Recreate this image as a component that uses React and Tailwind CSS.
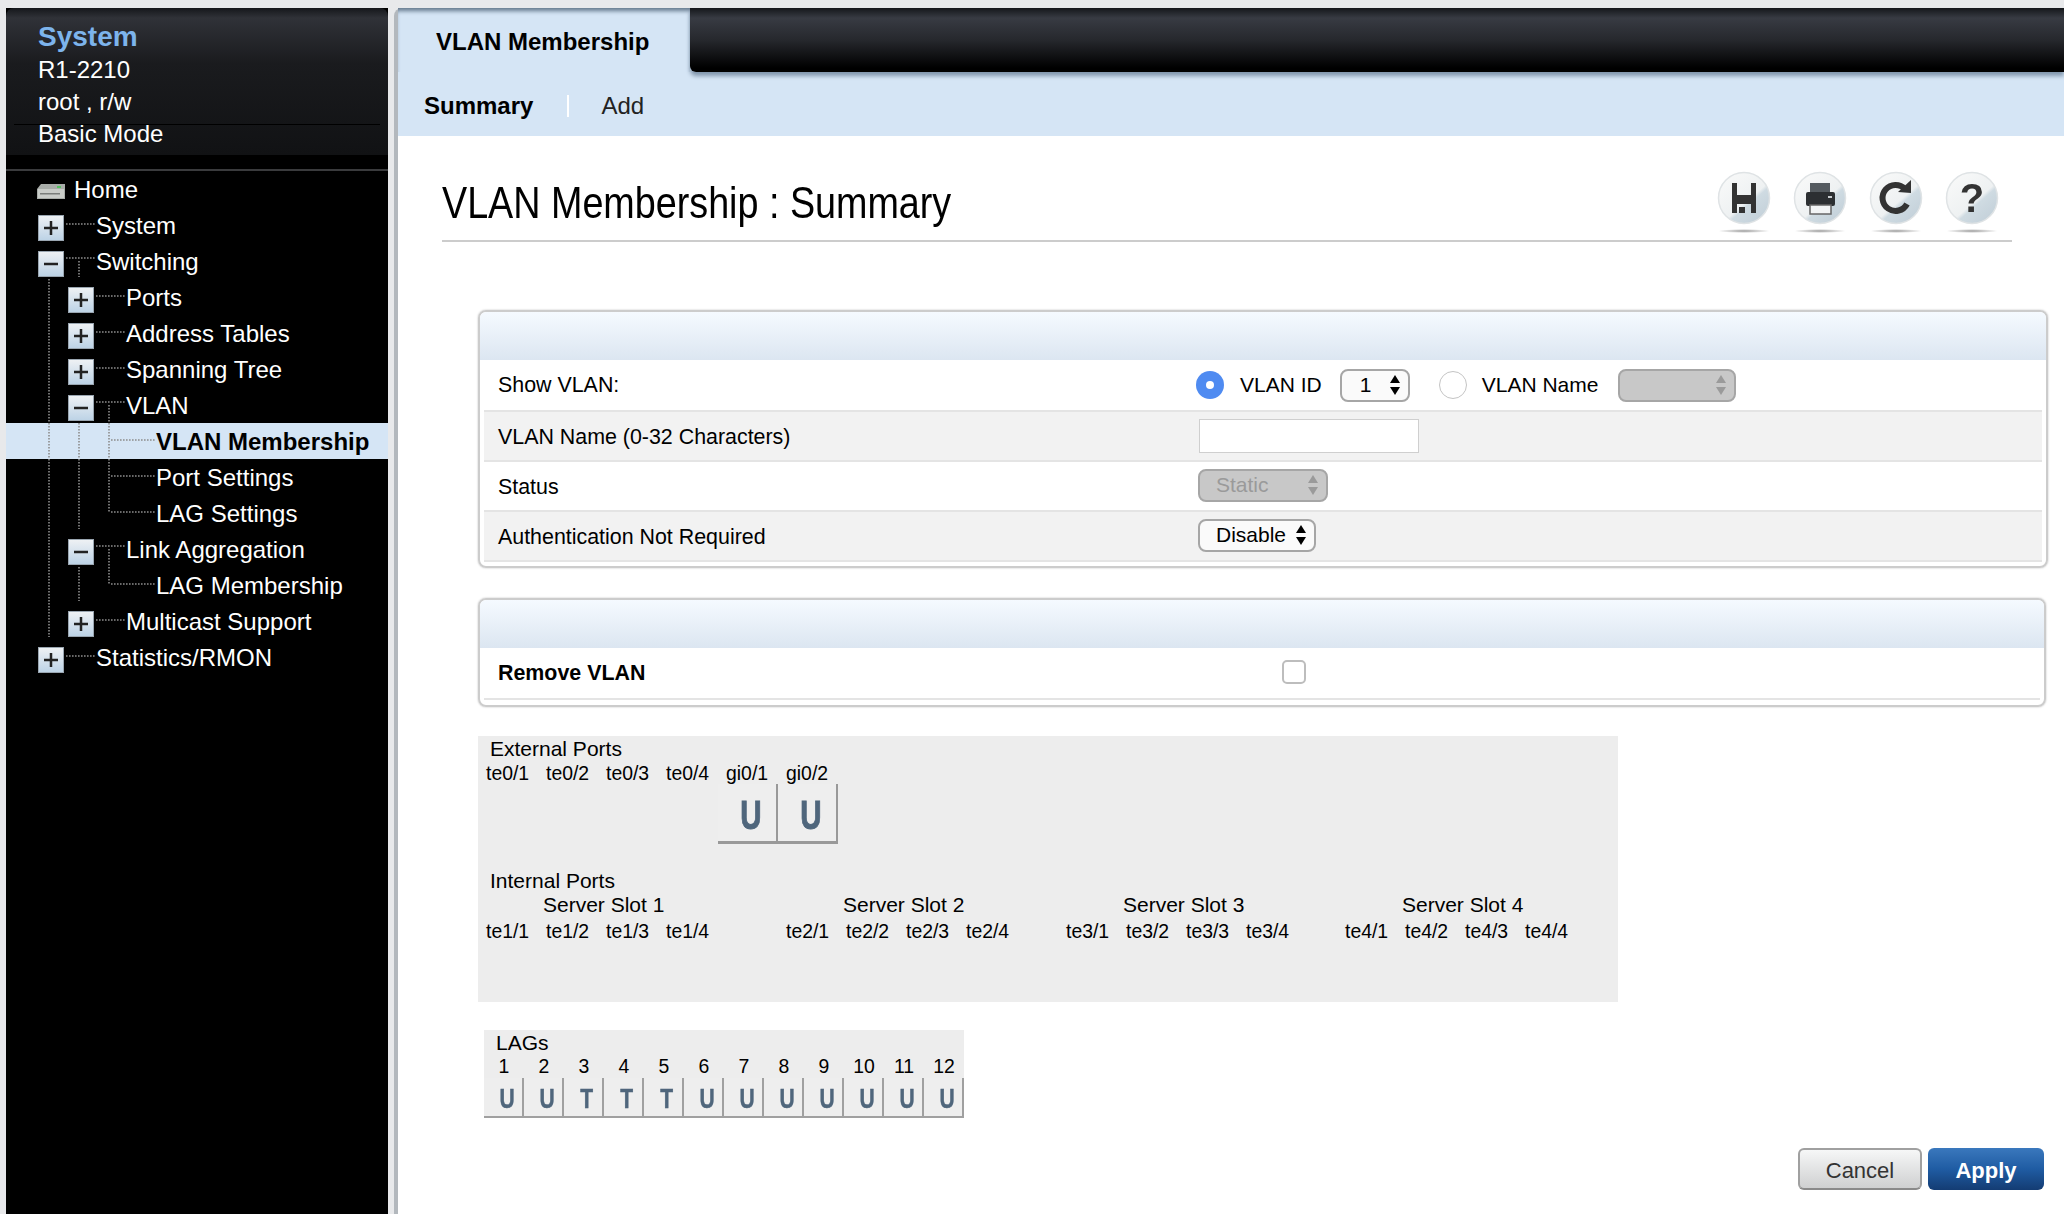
import React from "react";

const treeRows = [
  { label: "System", level: 0, box: "plus" },
  { label: "Switching", level: 0, box: "minus" },
  { label: "Ports", level: 1, box: "plus" },
  { label: "Address Tables", level: 1, box: "plus" },
  { label: "Spanning Tree", level: 1, box: "plus" },
  { label: "VLAN", level: 1, box: "minus" },
  { label: "VLAN Membership", level: 2, active: true },
  { label: "Port Settings", level: 2 },
  { label: "LAG Settings", level: 2 },
  { label: "Link Aggregation", level: 1, box: "minus" },
  { label: "LAG Membership", level: 2 },
  { label: "Multicast Support", level: 1, box: "plus" },
  { label: "Statistics/RMON", level: 0, box: "plus" },
];

const levelPad = { 0: "pl-[32px]", 1: "pl-[62px]", 2: "pl-[150px]" };
const levelGap = { 0: "ml-[32px]", 1: "ml-[32px]", 2: "ml-0" };

function TreeBox({ kind }) {
  return (
    <span className="mt-1.5 flex h-[26px] w-[26px] shrink-0 items-center justify-center border border-[#9aa6b1] bg-gradient-to-b from-[#eef1f4] to-[#bdd3e6]">
      <svg width="16" height="16" viewBox="0 0 16 16">
        <rect x="1" y="6.75" width="14" height="2.5" fill="#222" />
        {kind === "plus" && <rect x="6.75" y="1" width="2.5" height="14" fill="#222" />}
      </svg>
    </span>
  );
}

function TreeLines() {
  const lines = [
    [49, 280, 49, 638],
    [79, 262, 79, 278],
    [79, 424, 79, 530],
    [79, 568, 79, 602],
    [109, 406, 109, 513],
    [109, 550, 109, 585],
    [66, 225, 96, 225],
    [66, 259, 96, 259],
    [66, 657, 96, 657],
    [96, 297, 126, 297],
    [96, 333, 126, 333],
    [96, 369, 126, 369],
    [96, 403, 126, 403],
    [96, 547, 126, 547],
    [96, 621, 126, 621],
    [111, 441, 156, 441],
    [111, 477, 156, 477],
    [111, 513, 156, 513],
    [111, 585, 156, 585],
  ];
  return (
    <svg className="pointer-events-none absolute inset-0" width="382" height="520">
      <g transform="translate(-6,-172)" stroke="#8c8c8c" strokeWidth="1.6" strokeDasharray="1.6 1.4">
        {lines.map((l, i) => (
          <line key={i} x1={l[0]} y1={l[1]} x2={l[2]} y2={l[3]} />
        ))}
      </g>
    </svg>
  );
}

function Sidebar() {
  return (
    <aside className="flex w-[382px] shrink-0 flex-col bg-black text-white">
      <div className="relative h-[147px] rounded-t-lg bg-[linear-gradient(#15171b_0,#303238_10px,#1a1b1e_55px,#111214_147px)] pl-[32px] pt-[13px]">
        <div className="flex h-8 items-center text-[28px] font-bold text-[#7db4ec]">System</div>
        <div className="flex h-8 items-center pt-0.5 text-[24px]">R1-2210</div>
        <div className="flex h-8 items-center pt-0.5 text-[24px]">root , r/w</div>
        <div className="flex h-8 items-center pt-0.5 text-[24px]">Basic Mode</div>
        <div className="absolute left-2 right-2 top-[116px] h-px bg-black" />
      </div>
      <div className="h-4 border-b-2 border-[#3a3b3d]" />
      <div className="relative">
        <div className="flex h-9 items-center pl-[30px]">
          <svg width="30" height="18" viewBox="0 0 30 18" className="mt-1.5 shrink-0">
            <path d="M1 6 L5 1 H29 V16 H1 Z" fill="#a8aca8" />
            <rect x="2" y="6" width="26" height="9" fill="#c9ccc8" />
            <rect x="4" y="10" width="20" height="1.5" fill="#7a7d7a" />
            <rect x="21" y="3" width="4" height="2" fill="#55c060" />
          </svg>
          <span className="ml-2 pt-0.5 text-[24px]">Home</span>
        </div>
        {treeRows.map((r) => (
          <div
            key={r.label}
            className={`flex h-9 items-center text-[24px] ${levelPad[r.level]} ${
              r.active ? "bg-[#d5e5f5] font-bold text-black" : ""
            }`}
          >
            {r.box && <TreeBox kind={r.box} />}
            <span className={`pt-0.5 ${levelGap[r.level]}`}>{r.label}</span>
          </div>
        ))}
        <TreeLines />
      </div>
    </aside>
  );
}

function Orb({ children }) {
  return (
    <svg width="56" height="64" viewBox="0 0 56 64" className="shrink-0 blur-[0.5px]">
      <defs>
        <linearGradient id="orb" x1="0.2" y1="0.1" x2="0.9" y2="0.9">
          <stop offset="0" stopColor="#f7f8f8" />
          <stop offset="0.55" stopColor="#eef1f2" />
          <stop offset="0.62" stopColor="#cfdbe2" />
          <stop offset="1" stopColor="#c3d0d9" />
        </linearGradient>
        <radialGradient id="shade">
          <stop offset="0" stopColor="#9a9a9a" />
          <stop offset="1" stopColor="#ffffff" />
        </radialGradient>
      </defs>
      <circle cx="28" cy="27" r="25.5" fill="url(#orb)" stroke="#dfe3e5" strokeWidth="1.5" />
      <ellipse cx="28" cy="60" rx="26" ry="2" fill="url(#shade)" />
      {children}
    </svg>
  );
}

function ToolIcons() {
  return (
    <div className="mr-3 mt-[35px] flex gap-5">
      <Orb>
        <path
          fillRule="evenodd"
          d="M16 12 H21 V24 H35 V12 H40 V42 H35 V33 H21 V42 H16 Z"
          fill="#333"
        />
        <rect x="23" y="36" width="6" height="6" fill="#333" />
      </Orb>
      <Orb>
        <rect x="18" y="12" width="20" height="9" fill="#555b60" />
        <rect x="14" y="21" width="29" height="14" rx="2" fill="#2c2f32" />
        <rect x="18" y="34" width="21" height="9" fill="#f2f4f5" stroke="#666" strokeWidth="1.5" />
        <rect x="36" y="25" width="4" height="2" fill="#c9cdd0" />
      </Orb>
      <Orb>
        <path d="M37 18 A13 13 0 1 0 39 33" fill="none" stroke="#333" strokeWidth="6" />
        <path d="M30 21 L43 22 L43 9 Z" fill="#333" />
      </Orb>
      <Orb>
        <text
          x="28"
          y="41"
          textAnchor="middle"
          fontSize="40"
          fontWeight="700"
          fontFamily="'Liberation Sans', sans-serif"
          fill="#333"
        >
          ?
        </text>
      </Orb>
    </div>
  );
}

function Arrows({ dim }) {
  const c = dim ? "#9a9a9a" : "#000";
  return (
    <svg width="12" height="24" viewBox="0 0 12 24" className="shrink-0">
      <path d="M6 2 L11 10 H1 Z" fill={c} />
      <path d="M6 22 L11 14 H1 Z" fill={c} />
    </svg>
  );
}

function Row({ label, bold, gray, first, last, children }) {
  return (
    <div
      className={`mx-1 flex items-center border-[#e4e4e4] ${first ? "" : "border-t-2"} ${
        last ? "h-[52px] border-b-2" : "h-[50px]"
      } ${gray ? "bg-[#f2f2f2]" : "bg-white"}`}
    >
      <div className={`w-[715px] shrink-0 pl-[14px] text-[21.4px] ${first ? "" : "pt-0.5"} ${bold ? "font-bold" : ""}`}>
        {label}
      </div>
      <div className="flex flex-1 items-center">{children}</div>
    </div>
  );
}

function PanelHead() {
  return <div className="h-12 rounded-t-md bg-gradient-to-b from-[#f5faff] to-[#dce6f1]" />;
}

function Radio({ checked }) {
  return checked ? (
    <span className="flex h-7 w-7 shrink-0 items-center justify-center rounded-full bg-[#4f8bf1]">
      <span className="h-2 w-2 rounded-full bg-white" />
    </span>
  ) : (
    <span className="block h-7 w-7 shrink-0 rounded-full border border-[#c4c4c4] bg-white" />
  );
}

function Tile({ ch, big }) {
  return big ? (
    <div className="flex h-[60px] w-[60px] items-center justify-center border-b-[3px] border-r-2 border-[#999] bg-[#eeeeee] pl-2 pt-1.5">
      <span className="scale-x-[0.72] text-[41px] font-bold text-[#4f667c] blur-[0.6px] [-webkit-text-stroke:1px_#4f667c]">
        {ch}
      </span>
    </div>
  ) : (
    <div className="flex h-[40px] w-10 items-center justify-center border-b-2 border-r-2 border-[#a0a0a0] bg-[#eeeeee] pl-2 pt-1">
      <span className="scale-x-[0.75] text-[28px] font-bold text-[#4f667c] blur-[0.5px] [-webkit-text-stroke:0.5px_#4f667c]">
        {ch}
      </span>
    </div>
  );
}

function PortLabels({ names }) {
  return (
    <div className="flex text-[19.4px]">
      {names.map((n) => (
        <span key={n} className="w-[60px] shrink-0">
          {n}
        </span>
      ))}
    </div>
  );
}

const slots = [
  { title: "Server Slot 1", n: 1, w: "w-[300px]" },
  { title: "Server Slot 2", n: 2, w: "w-[280px]" },
  { title: "Server Slot 3", n: 3, w: "w-[279px]" },
  { title: "Server Slot 4", n: 4, w: "w-[272px]" },
];

const lags = ["U", "U", "T", "T", "T", "U", "U", "U", "U", "U", "U", "U"];

export default function App() {
  return (
    <div className="flex h-[1214px] w-[2064px] overflow-hidden bg-[#e8e9eb] pl-1.5 pt-2 font-['Liberation_Sans',Arial,sans-serif] text-black">
      <Sidebar />
      <main className="ml-1.5 flex flex-1 flex-col rounded-tl-lg border-l-4 border-[#b3b8bd] bg-white">
        <header className="flex h-32 flex-col bg-[#d5e5f5]">
          <div className="flex h-16">
            <div className="flex w-[292px] items-center pl-[38px] pt-1 text-[24px] font-bold shadow-[inset_0_5px_4px_-2px_#64788c]">
              VLAN Membership
            </div>
            <div className="relative flex-1 rounded-bl-md bg-[linear-gradient(#15171b_0,#383b43_10px,#26282d_32px,#000_60px)] shadow-[0_4px_4px_0_#8196ac]" />
          </div>
          <nav className="flex flex-1 items-center pl-[26px] pt-[3px]">
            <span className="text-[24px] font-bold">Summary</span>
            <span className="ml-[34px] h-[22px] w-0.5 bg-white" />
            <span className="ml-[32px] text-[24px] text-[#222]">Add</span>
          </nav>
        </header>

        <div className="ml-[44px] flex h-[106px] w-[1570px] items-start justify-between border-b-2 border-[#cccccc]">
          <h1 className="mt-[42px] origin-left scale-x-[0.857] whitespace-nowrap text-[44px] leading-[50px]">
            VLAN Membership : Summary
          </h1>
          <ToolIcons />
        </div>

        <section className="ml-[80px] mt-[68px] w-[1570px] rounded-lg border-2 border-[#cccccc] pb-1 text-[21px] shadow-[0_0_2px_#bbbbbb]">
          <PanelHead />
          <Row label="Show VLAN:" first>
            <span className="-ml-[3px]">
              <Radio checked />
            </span>
            <span className="ml-4">VLAN ID</span>
            <div className="ml-[18px] flex h-[33px] w-[70px] items-center justify-between rounded-lg border-2 border-[#a6a6a6] bg-[#fafafa] pl-[18px] pr-[7px]">
              <span>1</span>
              <Arrows />
            </div>
            <span className="ml-[29px] block">
              <Radio />
            </span>
            <span className="ml-[15px]">VLAN Name</span>
            <div className="ml-[20px] flex h-[33px] w-[118px] items-center justify-end rounded-lg border-2 border-[#a6a6a6] bg-[#c8c8c8] pr-[7px]">
              <Arrows dim />
            </div>
          </Row>
          <Row label="VLAN Name (0-32 Characters)" gray>
            <div className="h-[34px] w-[220px] border border-[#cfcfcf] bg-white" />
          </Row>
          <Row label="Status">
            <div className="-ml-px -mt-0.5 flex h-[33px] w-[130px] items-center justify-between rounded-lg border-2 border-[#a6a6a6] bg-[#c8c8c8] pl-[16px] pr-[7px] text-[#9a9a9a]">
              <span>Static</span>
              <Arrows dim />
            </div>
          </Row>
          <Row label="Authentication Not Required" gray last>
            <div className="-ml-px -mt-0.5 flex h-[33px] w-[118px] items-center justify-between rounded-lg border-2 border-[#a6a6a6] bg-[#fafafa] pl-[16px] pr-[7px]">
              <span>Disable</span>
              <Arrows />
            </div>
          </Row>
        </section>

        <section className="ml-[80px] mt-[30px] w-[1568px] rounded-lg border-2 border-[#cccccc] pb-[5px] text-[21px] shadow-[0_0_2px_#bbbbbb]">
          <PanelHead />
          <Row label="Remove VLAN" bold first last>
            <span className="-mt-0.5 ml-[83px] h-6 w-6 rounded-[5px] border-2 border-[#bdbdbd] bg-white" />
          </Row>
        </section>

        <section className="ml-[80px] mt-[29px] h-[266px] w-[1140px] bg-[#ededed]">
          <div className="flex h-[26px] items-center pl-3 text-[21px]">External Ports</div>
          <div className="flex h-[22px] items-center pl-2 pt-0.5">
            <PortLabels names={["te0/1", "te0/2", "te0/3", "te0/4", "gi0/1", "gi0/2"]} />
          </div>
          <div className="ml-[240px] flex">
            <Tile ch="U" big />
            <Tile ch="U" big />
          </div>
          <div className="mt-6 flex h-[26px] items-center pl-3 text-[21px]">Internal Ports</div>
          <div className="flex pl-2">
            {slots.map((s) => (
              <div key={s.n} className={`${s.w} shrink-0`}>
                <div className="flex h-[22px] items-center pl-[57px] text-[21px]">{s.title}</div>
                <div className="mt-1 flex h-[22px] items-center pt-0.5">
                  <PortLabels names={[1, 2, 3, 4].map((p) => `te${s.n}/${p}`)} />
                </div>
              </div>
            ))}
          </div>
        </section>

        <section className="ml-[86px] mt-[28px] w-[480px] bg-[#ededed]">
          <div className="flex h-[26px] items-center pl-3 text-[21px]">LAGs</div>
          <div className="grid h-[22px] grid-cols-12 items-start text-center text-[19.4px] leading-[21px]">
            {lags.map((_, i) => (
              <span key={i}>{i + 1}</span>
            ))}
          </div>
          <div className="grid grid-cols-12">
            {lags.map((c, i) => (
              <Tile key={i} ch={c} />
            ))}
          </div>
        </section>

        <div className="mr-5 mt-[30px] flex justify-end gap-1.5 text-[22px]">
          <button className="h-[42px] w-[124px] rounded-md border-2 border-[#a0a0a0] border-b-[#8a8a8a] bg-gradient-to-b from-[#f6f7f7] to-[#cfd0d1] pt-0.5 text-[#333]">
            Cancel
          </button>
          <button className="h-[42px] w-[116px] rounded-md bg-gradient-to-b from-[#3a78bd] via-[#1f5ca3] to-[#143c73] pt-0.5 font-bold text-white">
            Apply
          </button>
        </div>
      </main>
    </div>
  );
}
